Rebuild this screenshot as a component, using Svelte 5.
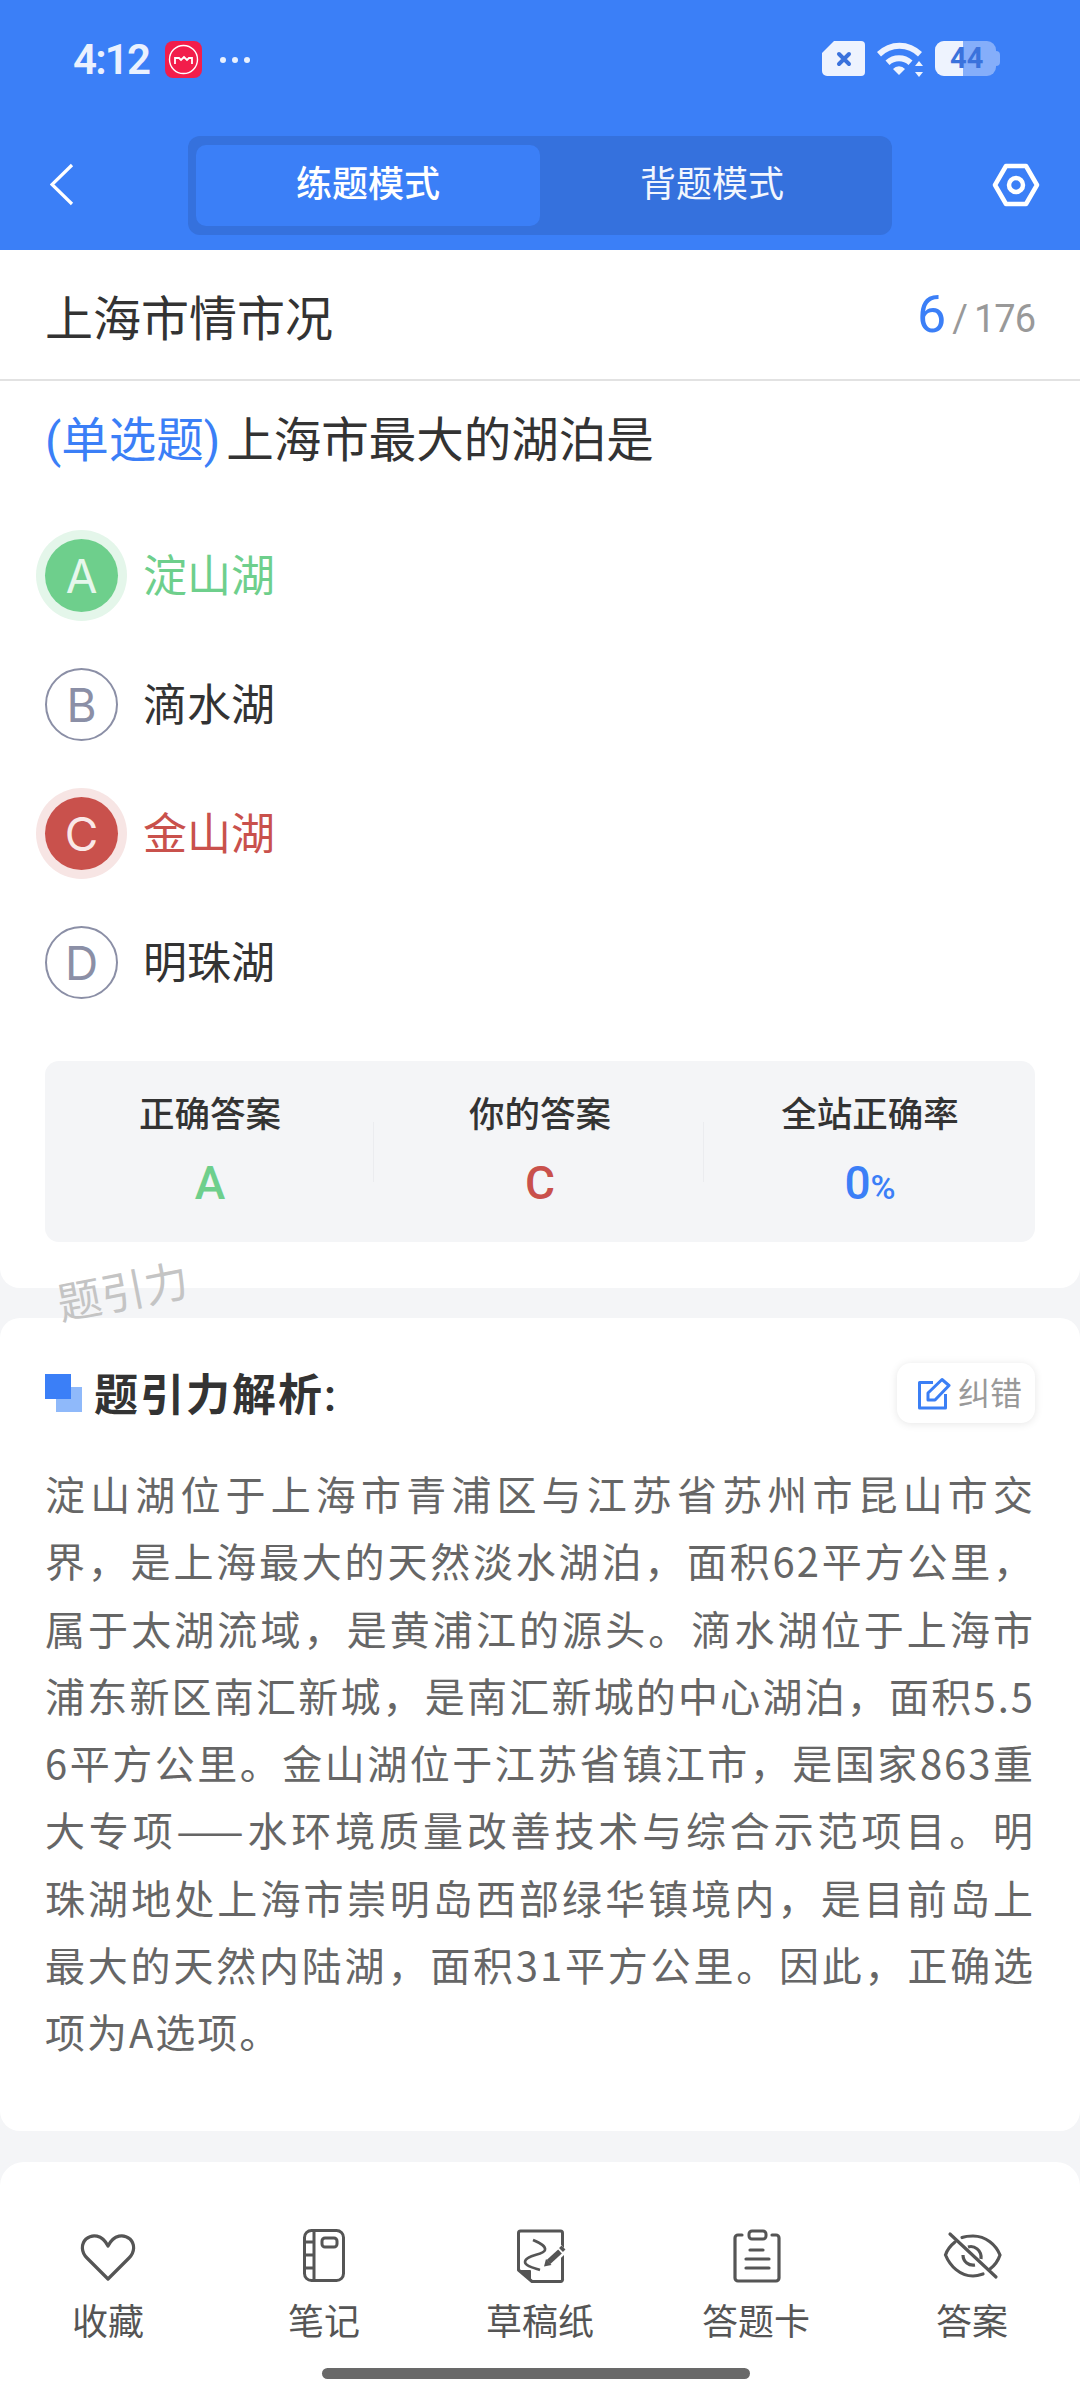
<script>
	const options = [
		{ key: 'A', text: '淀山湖', state: 'right' },
		{ key: 'B', text: '滴水湖', state: '' },
		{ key: 'C', text: '金山湖', state: 'wrong' },
		{ key: 'D', text: '明珠湖', state: '' }
	];
	const analysis =
		'淀山湖位于上海市青浦区与江苏省苏州市昆山市交界，是上海最大的天然淡水湖泊，面积62平方公里，属于太湖流域，是黄浦江的源头。滴水湖位于上海市浦东新区南汇新城，是南汇新城的中心湖泊，面积5.56平方公里。金山湖位于江苏省镇江市，是国家863重大专项——水环境质量改善技术与综合示范项目。明珠湖地处上海市崇明岛西部绿华镇境内，是目前岛上最大的天然内陆湖，面积31平方公里。因此，正确选项为A选项。';
</script>

<div class="page">
	<header class="top">
		<div class="status">
			<div class="status-left">
				<span class="time">4:12</span>
				<svg viewBox="0 0 37 37" width="37" height="37">
					<rect width="37" height="37" rx="8" fill="#f21d4b" />
					<circle cx="18.5" cy="18.5" r="14" fill="none" stroke="#fff" stroke-width="1.4" />
					<path d="M10 23v-6h4l2 2 3-3 3 3 2-2h3v6" fill="none" stroke="#fff" stroke-width="1.8" />
				</svg>
				<svg class="dots" viewBox="0 0 32 8" width="32" height="8">
					<circle cx="4" cy="4" r="3" fill="#eaf1fe" />
					<circle cx="16" cy="4" r="3" fill="#eaf1fe" />
					<circle cx="28" cy="4" r="3" fill="#eaf1fe" />
				</svg>
			</div>
			<div class="status-right">
				<svg viewBox="0 0 43 35" width="43" height="35">
					<path d="M12 0h27a4 4 0 0 1 4 4v27a4 4 0 0 1-4 4H5a5 5 0 0 1-5-5V12z" fill="#eef3fe" />
					<path d="M17 13l10 10M27 13L17 23" stroke="#3a72dc" stroke-width="4" stroke-linecap="round" />
				</svg>
				<svg viewBox="0 0 46 36" width="46" height="36">
					<path d="M0 11a32 32 0 0 1 45 0l-4 4.500a26 26 0 0 0-37 0z" fill="#eef3fe" />
					<path d="M8.500 19.500a20 20 0 0 1 27 0l-4 4.500a14 14 0 0 0-19 0z" fill="#eef3fe" />
					<path d="M16 28a8 8 0 0 1 12 0l-6 6z" fill="#eef3fe" />
					<path d="M42 20l4 5h-8zM42 36l-4-5h8z" fill="#eef3fe" />
				</svg>
				<div class="battery">
					<span class="battery-fill"></span>
					<span class="battery-num">44</span>
					<span class="battery-tip"></span>
				</div>
			</div>
		</div>
		<div class="nav">
			<svg class="back" viewBox="0 0 24 44" width="24" height="44">
				<path d="M22 2L2 21.500 22 41" fill="none" stroke="#fff" stroke-width="3.200" />
			</svg>
			<div class="tabs">
				<div class="tab active">练题模式</div>
				<div class="tab">背题模式</div>
			</div>
			<svg class="setting" viewBox="0 0 48 44" width="48" height="44">
				<path d="M14 3h20l11 19-11 19H14L3 22z" fill="none" stroke="#fff" stroke-width="4.500" stroke-linejoin="round" />
				<circle cx="24" cy="22" r="7" fill="none" stroke="#fff" stroke-width="4.500" />
			</svg>
		</div>
	</header>

	<section class="card question">
		<div class="title-row">
			<h1>上海市情市况</h1>
			<div class="count"><b>6</b><i>/</i><span>176</span></div>
		</div>
		<p class="stem"><span>(单选题)</span>上海市最大的湖泊是</p>
		<ul class="options">
			{#each options as o}
				<li class={o.state}>
					<span class="letter">{o.key}</span>
					<span class="label">{o.text}</span>
				</li>
			{/each}
		</ul>
		<div class="summary">
			<div class="cell">
				<span>正确答案</span>
				<strong class="green">A</strong>
			</div>
			<div class="cell">
				<span>你的答案</span>
				<strong class="red">C</strong>
			</div>
			<div class="cell">
				<span>全站正确率</span>
				<strong class="blue">0<small>%</small></strong>
			</div>
		</div>
		<div class="watermark">题引力</div>
	</section>

	<section class="card analysis">
		<div class="analysis-head">
			<div class="analysis-title">
				<span class="squares"><i></i><i></i></span>
				<h2>题引力解析:</h2>
			</div>
			<div class="fix">
				<svg viewBox="0 0 33 33" width="33" height="33">
					<path d="M15 5.500H1.500V31H27.500V17" fill="none" stroke="#3b7ff5" stroke-width="3" stroke-linejoin="round" />
					<path d="M10 23v-7L24 2.500l7 6L17 23z" fill="none" stroke="#3b7ff5" stroke-width="3" stroke-linejoin="round" />
				</svg>
				<span>纠错</span>
			</div>
		</div>
		<p class="analysis-text">{analysis}</p>
	</section>

	<nav class="bottom">
		<div class="item">
			<svg viewBox="0 0 60 54" width="60" height="54">
				<path d="M30 50L9 29C3 23 3 15 8 10c6-5 16-5 22 7 6-12 16-12 22-7 5 5 5 13-1 19z" fill="none" stroke="#555" stroke-width="3.200" stroke-linejoin="round" />
			</svg>
			<span>收藏</span>
		</div>
		<div class="item">
			<svg viewBox="0 0 60 54" width="60" height="54">
				<rect x="10.500" y="1.500" width="39" height="50" rx="7" fill="none" stroke="#555" stroke-width="3" />
				<path d="M20 1.500v50M10.500 13h9.500M10.500 26h9.500M10.500 39h9.500" fill="none" stroke="#555" stroke-width="3" />
				<rect x="28" y="9" width="15" height="9" rx="3" fill="none" stroke="#555" stroke-width="3" />
			</svg>
			<span>笔记</span>
		</div>
		<div class="item">
			<svg viewBox="0 0 60 54" width="60" height="54">
				<path d="M22 52.500L8.500 41V4a2 2 0 0 1 2-2h40a2 2 0 0 1 2 2v46a2 2 0 0 1-2 2.500z" fill="none" stroke="#555" stroke-width="3" stroke-linejoin="round" />
				<path d="M9.500 41H20a1 1 0 0 1 1 1v9z" fill="#555" />
				<path d="M23 11c7 3 13 6 12 10-1 5-20 5-20 12 0 4 9 6 15 8" fill="none" stroke="#555" stroke-width="2.600" />
				<path d="M36 36l18-17" stroke="#fff" stroke-width="10" />
				<path d="M38.500 33L50 22.500" stroke="#555" stroke-width="5.500" />
				<path d="M34 37.500l2-7.500 5.500 6z" fill="#555" />
				<path d="M51 21l2.500-2.500" stroke="#555" stroke-width="5.500" />
			</svg>
			<span>草稿纸</span>
		</div>
		<div class="item">
			<svg viewBox="0 0 60 54" width="60" height="54">
				<path d="M16 6h-4a3 3 0 0 0-3 3v40a3 3 0 0 0 3 3h38a3 3 0 0 0 3-3V9a3 3 0 0 0-3-3h-4" fill="none" stroke="#555" stroke-width="3.200" stroke-linecap="round" />
				<rect x="23" y="2" width="17" height="8" rx="3" fill="none" stroke="#555" stroke-width="3" />
				<path d="M24 21h13M20 30h23M20 39h23" fill="none" stroke="#555" stroke-width="3.200" stroke-linecap="round" />
			</svg>
			<span>答题卡</span>
		</div>
		<div class="item">
			<svg viewBox="0 0 60 54" width="60" height="54">
				<path d="M13 13C8 17 5 21 3.500 26 8 37 18 47 31 47c4 0 7-1 10-2M20 8.500C24 7 27 7 31 7c13 0 23 9 27 19-2 6-6 11-10 14" fill="none" stroke="#555" stroke-width="3.200" stroke-linecap="round" />
				<path d="M26 18c6-2 14 3 13 12M21 26c0 7 6 11 12 10" fill="none" stroke="#555" stroke-width="3.200" />
				<path d="M8 5l46 43" stroke="#555" stroke-width="3.200" stroke-linecap="round" />
			</svg>
			<span>答案</span>
		</div>
		<div class="home-bar"></div>
	</nav>
</div>

<style>
	:global(body) {
		background: #f4f5f7;
		font-family: 'Roboto', 'Noto Sans CJK SC', sans-serif;
	}

	* {
		box-sizing: border-box;
	}

	.page {
		width: 1080px;
		height: 2400px;
		display: flex;
		flex-direction: column;
		background: #f4f5f7;
		overflow: hidden;
	}

	.top {
		height: 250px;
		background: #3b7ff7;
		color: #fff;
	}

	.status {
		height: 136px;
		padding: 41px 84px 0 73px;
		display: flex;
		justify-content: space-between;
		align-items: flex-start;
	}

	.status-left {
		display: flex;
		align-items: center;
		gap: 16px;
	}

	.time {
		font-size: 42px;
		line-height: 37px;
		font-weight: 600;
		letter-spacing: -1.800px;
		color: #eaf1fe;
	}

	.dots {
		margin-left: 1px;
	}

	.status-right {
		display: flex;
		align-items: flex-start;
		gap: 12px;
	}

	.battery {
		position: relative;
		width: 61px;
		height: 35px;
		border-radius: 9px;
		background: #85aefa;
	}

	.battery-fill {
		position: absolute;
		left: 0;
		top: 0;
		width: 28px;
		height: 35px;
		background: #eef3fe;
		border-radius: 9px 0 0 9px;
	}

	.battery-num {
		position: absolute;
		left: 15px;
		top: 0;
		font-size: 29px;
		line-height: 35px;
		font-weight: 700;
		color: #3a72dc;
	}

	.battery-tip {
		position: absolute;
		left: 61px;
		top: 10px;
		width: 4px;
		height: 15px;
		background: #85aefa;
		border-radius: 0 4px 4px 0;
	}

	.nav {
		height: 99px;
		padding: 0 40px 0 50px;
		display: flex;
		align-items: center;
	}

	.back {
		margin-top: -2px;
	}

	.tabs {
		width: 704px;
		height: 99px;
		margin-left: 114px;
		padding: 9px 8px;
		background: #3571dd;
		border-radius: 12px;
		display: flex;
	}

	.tab {
		flex: 1;
		border-radius: 10px;
		font-size: 36px;
		line-height: 81px;
		text-align: center;
		color: #f2f6fe;
	}

	.tab.active {
		background: #3b7ff7;
		font-weight: 500;
		color: #fff;
	}

	.setting {
		margin-left: auto;
		margin-top: -2px;
	}

	.card {
		background: #fff;
		position: relative;
	}

	.question {
		height: 1038px;
		padding: 0 45px;
		border-radius: 0 0 20px 20px;
	}

	.title-row {
		height: 131px;
		margin: 0 -45px;
		padding: 0 45px;
		border-bottom: 2px solid #e2e2e2;
		display: flex;
		justify-content: space-between;
		align-items: center;
	}

	h1 {
		margin: 0;
		font-size: 48px;
		font-weight: 400;
		color: #333;
	}

	.count {
		display: flex;
		align-items: baseline;
		color: #999;
		font-size: 38px;
	}

	.count b {
		font-size: 52px;
		font-weight: 400;
		color: #3b7ff7;
	}

	.count i {
		font-style: normal;
		margin: 0 6px;
	}

	.count span {
		letter-spacing: -1px;
	}

	.stem {
		margin: 0;
		padding-top: 27px;
		font-size: 47.500px;
		line-height: 66px;
		color: #333;
		white-space: nowrap;
	}

	.stem span {
		color: #3b7ff7;
		margin-right: 6px;
	}

	.options {
		list-style: none;
		margin: 0;
		padding: 37px 0 0;
	}

	.options li {
		height: 129px;
		display: flex;
		align-items: center;
		gap: 25px;
		font-size: 44px;
		color: #333;
	}

	.label {
		padding-bottom: 5px;
	}

	.letter {
		width: 73px;
		height: 73px;
		border: 2px solid #8b8fa6;
		border-radius: 50%;
		display: flex;
		align-items: center;
		justify-content: center;
		font-family: 'Inter', sans-serif;
		font-size: 46px;
		color: #8b8fa6;
	}

	li.right {
		color: #6ecf8c;
	}

	li.wrong {
		color: #c9514c;
	}

	li.right .letter {
		background: #6ecf8c;
		border: 0;
		color: #e6f7ec;
		box-shadow: 0 0 0 9px #e4f6ea;
	}

	li.wrong .letter {
		background: #c9514c;
		border: 0;
		color: #fae8e7;
		box-shadow: 0 0 0 9px #f7e5e4;
	}

	.summary {
		margin-top: 34px;
		height: 181px;
		background: #f4f5f7;
		border-radius: 14px;
		display: grid;
		grid-template-columns: repeat(3, 1fr);
		padding-top: 30px;
	}

	.cell {
		position: relative;
		display: flex;
		flex-direction: column;
		align-items: center;
		gap: 19px;
	}

	.cell + .cell::before {
		content: '';
		position: absolute;
		left: -2px;
		top: 31px;
		height: 60px;
		width: 1px;
		background: #ebecef;
	}

	.cell span {
		font-size: 35.500px;
		line-height: 48px;
		font-weight: 500;
		color: #333;
	}

	.cell strong {
		font-size: 46px;
		line-height: 50px;
		font-weight: 500;
	}

	.cell small {
		font-size: 34px;
	}

	.green {
		color: #6ecf8c;
	}

	.red {
		color: #c9514c;
	}

	.blue {
		color: #3b7ff7;
	}

	.watermark {
		position: absolute;
		left: 57px;
		top: 1018px;
		font-size: 44px;
		line-height: 50px;
		color: #c4c4c4;
		transform: rotate(-11deg);
		z-index: 2;
	}

	.analysis {
		margin-top: 30px;
		height: 813px;
		padding: 45px 45px 0;
		border-radius: 20px;
	}

	.analysis-head {
		display: flex;
		justify-content: space-between;
		align-items: center;
		height: 60px;
	}

	.analysis-title {
		display: flex;
		align-items: center;
		gap: 12px;
	}

	.squares {
		position: relative;
		width: 37px;
		height: 38px;
	}

	.squares i {
		position: absolute;
		width: 26px;
		height: 25px;
	}

	.squares i:first-child {
		right: 0;
		bottom: 0;
		background: #8fb9fa;
	}

	.squares i:last-child {
		left: 0;
		top: 0;
		background: #3b7ff7;
	}

	h2 {
		margin: 0;
		padding-bottom: 3px;
		font-size: 44px;
		font-weight: 600;
		letter-spacing: 2px;
		color: #333;
	}

	.fix {
		width: 138px;
		height: 60px;
		padding-left: 21px;
		border-radius: 14px;
		background: #fff;
		box-shadow: 0 1px 8px rgba(0, 0, 0, 0.1);
		display: flex;
		align-items: center;
		gap: 7px;
		font-size: 32px;
		color: #999;
	}

	.fix span {
		padding-bottom: 5px;
	}

	.analysis-text {
		margin: 37px 0 0;
		font-family: 'Noto Sans CJK SC', sans-serif;
		font-size: 40px;
		letter-spacing: 2px;
		line-height: 67.300px;
		color: #666;
		word-break: break-all;
		text-align: justify;
	}

	.bottom {
		position: relative;
		margin-top: 31px;
		flex: 1;
		background: #fff;
		border-radius: 24px 24px 0 0;
		padding-top: 67px;
		display: grid;
		grid-template-columns: repeat(5, 1fr);
		align-items: start;
	}

	.item {
		display: flex;
		flex-direction: column;
		align-items: center;
		gap: 17px;
		font-size: 36px;
		line-height: 46px;
		color: #555;
	}

	.home-bar {
		position: absolute;
		left: 322px;
		bottom: 21px;
		width: 428px;
		height: 11px;
		border-radius: 6px;
		background: #696969;
	}
</style>
